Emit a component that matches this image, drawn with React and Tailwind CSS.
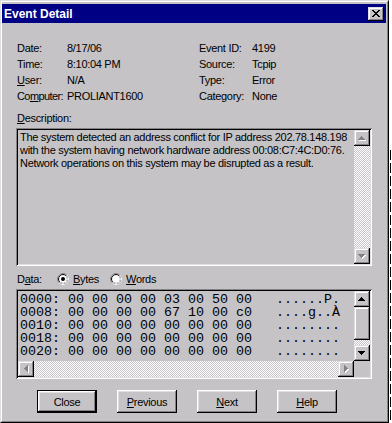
import React from "react";

const RAISED =
  "shadow-[inset_-1px_-1px_#000,inset_1px_1px_#dfdfdf,inset_-2px_-2px_#848284,inset_2px_2px_#fff]";
const BUTTON =
  "shadow-[inset_-1px_-1px_#000,inset_1px_1px_#fff,inset_-2px_-2px_#848284,inset_2px_2px_#dfdfdf]";
const SUNKEN =
  "shadow-[inset_1px_1px_#848284,inset_-1px_-1px_#fff,inset_2px_2px_#000,inset_-2px_-2px_#dfdfdf]";
const CHECKER =
  "bg-[image:repeating-conic-gradient(#c6c3c6_0_25%,#fff_0_50%)] bg-[length:2px_2px]";

// pixel glyphs for the scrollbar arrows
const GLYPHS = {
  up: [[3, 2, 1, 1], [2, 3, 3, 1], [1, 4, 5, 1], [0, 5, 7, 1]],
  down: [[0, 2, 7, 1], [1, 3, 5, 1], [2, 4, 3, 1], [3, 5, 1, 1]],
  left: [[2, 3, 1, 1], [3, 2, 1, 3], [4, 1, 1, 5], [5, 0, 1, 7]],
  right: [[2, 0, 1, 7], [3, 1, 1, 5], [4, 2, 1, 3], [5, 3, 1, 1]],
};

function Arrow({ dir, disabled }) {
  const rects = GLYPHS[dir];
  return (
    <svg width="8" height="8" viewBox="0 0 8 8" shapeRendering="crispEdges">
      {disabled &&
        rects.map(([x, y, w, h], i) => (
          <rect key={"s" + i} x={x + 1} y={y + 1} width={w} height={h} fill="#fff" />
        ))}
      {rects.map(([x, y, w, h], i) => (
        <rect key={i} x={x} y={y} width={w} height={h} fill={disabled ? "#848284" : "#000"} />
      ))}
    </svg>
  );
}

function ScrollBtn({ dir, disabled }) {
  return (
    <div className={`w-[16px] h-[16px] shrink-0 bg-[#c6c3c6] flex items-center justify-center ${RAISED}`}>
      <Arrow dir={dir} disabled={disabled} />
    </div>
  );
}

function Radio({ checked }) {
  return (
    <svg width="12" height="12" viewBox="0 0 12 12">
      <circle cx="6" cy="6" r="5.5" fill="#fff" stroke="#848284" strokeWidth="1" />
      <path d="M9.89 2.11 A5.5 5.5 0 0 1 2.11 9.89" fill="none" stroke="#fff" strokeWidth="1" />
      <circle cx="6" cy="6" r="4.5" fill="none" stroke="#000" strokeWidth="1" />
      <path d="M9.18 2.82 A4.5 4.5 0 0 1 2.82 9.18" fill="none" stroke="#dfdfdf" strokeWidth="1" />
      {checked && <circle cx="6" cy="6" r="2" fill="#000" />}
    </svg>
  );
}

function CloseGlyph() {
  const rows = ["XX....XX", ".XX..XX.", "..XXXX..", "...XX...", "..XXXX..", ".XX..XX.", "XX....XX"];
  return (
    <svg width="8" height="7" viewBox="0 0 8 7" shapeRendering="crispEdges">
      {rows.flatMap((r, y) =>
        r.split("").map((c, x) => (c === "X" ? <rect key={`${x}-${y}`} x={x} y={y} width="1" height="1" fill="#000" /> : null))
      )}
    </svg>
  );
}

const info = [
  ["Date:", "8/17/06", "Event ID:", "4199"],
  ["Time:", "8:10:04 PM", "Source:", "Tcpip"],
  [<><u>U</u>ser:</>, "N/A", "Type:", "Error"],
  [<span className="tracking-[-0.6px]">Co<u>m</u>puter:</span>, "PROLIANT1600", "Category:", "None"],
];

const description = [
  "The system detected an address conflict for IP address 202.78.148.198",
  "with the system having network hardware address 00:08:C7:4C:D0:76.",
  "Network operations on this system may be disrupted as a result.",
];

const hexRows = [
  "0000: 00 00 00 00 03 00 50 00   ......P.",
  "0008: 00 00 00 00 67 10 00 c0   ....g..\u00c0",
  "0010: 00 00 00 00 00 00 00 00   ........",
  "0018: 00 00 00 00 00 00 00 00   ........",
  "0020: 00 00 00 00 00 00 00 00   ........",
];

function PushButton({ children, isDefault }) {
  if (isDefault) {
    return (
      <div className="w-[60px] h-[23px] border border-black">
        <div className={`w-full h-full flex items-center justify-center ${BUTTON}`}>{children}</div>
      </div>
    );
  }
  return <div className={`w-[60px] h-[23px] flex items-center justify-center ${BUTTON}`}>{children}</div>;
}

export default function App() {
  return (
    <div className="w-[392px] h-[423px] bg-white flex overflow-hidden font-['Liberation_Sans',Arial,sans-serif] text-[11px] tracking-[-0.3px] leading-[16px] text-black">
      <div className="w-[389px] h-[423px] shrink-0 border border-t-[#dfdfdf] border-l-[#dfdfdf] border-r-black border-b-black">
        <div className="h-full flex flex-col bg-[#c6c3c6] border border-t-white border-l-white border-r-[#848284] border-b-[#848284] pt-[2px] pr-[1px]">
          {/* title bar */}
          <div className="h-[19px] shrink-0 bg-[#000084] flex items-center justify-between pl-[2px] pr-[2px]">
            <span className="text-white font-bold text-[12px] tracking-normal leading-none">Event Detail</span>
            <div className={`w-[16px] h-[14px] bg-[#c6c3c6] flex items-center justify-center ${RAISED}`}>
              <CloseGlyph />
            </div>
          </div>

          <div className="flex flex-col px-[14px] pt-[17px]">
            {/* header fields */}
            <div className="grid grid-cols-[50px_132px_53px_1fr] pl-[1px]">
              {info.map((row, i) => (
                <React.Fragment key={i}>
                  <div className="h-[16px] whitespace-nowrap">{row[0]}</div>
                  <div className="h-[16px] whitespace-nowrap">{row[1]}</div>
                  <div className="h-[16px] whitespace-nowrap">{row[2]}</div>
                  <div className="h-[16px] whitespace-nowrap">{row[3]}</div>
                </React.Fragment>
              ))}
            </div>

            <div className="mt-[6px] h-[16px] pl-[1px]">
              <u>D</u>escription:
            </div>

            {/* description box */}
            <div className={`mt-[2px] h-[138px] p-[2px] flex ${SUNKEN}`}>
              <div className="flex-1 pl-[2px] pt-[1px] leading-[13px] overflow-hidden">
                {description.map((line) => (
                  <div key={line} className="whitespace-nowrap">{line}</div>
                ))}
              </div>
              <div className="w-[16px] flex flex-col">
                <ScrollBtn dir="up" disabled />
                <div className={`flex-1 ${CHECKER}`} />
                <ScrollBtn dir="down" disabled />
              </div>
            </div>

            {/* data header */}
            <div className="mt-[5px] h-[16px] flex items-center pl-[1px]">
              <span className="w-[40px]">D<u>a</u>ta:</span>
              <span className="w-[53px] flex items-center gap-[4px]">
                <Radio checked />
                <span><u>B</u>ytes</span>
              </span>
              <span className="flex items-center gap-[4px]">
                <Radio />
                <span><u>W</u>ords</span>
              </span>
            </div>

            {/* data box */}
            <div className={`mt-[2px] h-[90px] p-[2px] flex flex-col ${SUNKEN}`}>
              <div className="h-[70px] flex">
                <div className="flex-1 pl-[2px] pt-[2px] overflow-hidden font-['Liberation_Mono','Courier_New',monospace] text-[13.33px] leading-[13px] tracking-normal">
                  {hexRows.map((row) => (
                    <div key={row} className="h-[13px] whitespace-pre">{row}</div>
                  ))}
                </div>
                <div className="w-[16px] flex flex-col">
                  <ScrollBtn dir="up" />
                  <div className={`h-[33px] bg-[#c6c3c6] ${RAISED}`} />
                  <div className={`flex-1 ${CHECKER}`} />
                  <ScrollBtn dir="down" />
                </div>
              </div>
              <div className="h-[16px] flex">
                <ScrollBtn dir="left" disabled />
                <div className={`flex-1 ${CHECKER}`} />
                <ScrollBtn dir="right" disabled />
                <div className="w-[16px] bg-[#c6c3c6]" />
              </div>
            </div>

            {/* buttons */}
            <div className="mt-[11px] flex gap-[20px] pl-[21px]">
              <PushButton isDefault>Close</PushButton>
              <PushButton><u>P</u>revious</PushButton>
              <PushButton><u>N</u>ext</PushButton>
              <PushButton><u>H</u>elp</PushButton>
            </div>
          </div>
        </div>
      </div>

      {/* edge of the window behind */}
      <div className="w-[3px] h-[423px] pt-[150px] pl-[1px]">
        <div className="w-[1px] h-[273px] bg-[image:repeating-linear-gradient(to_bottom,#000_0_10px,transparent_10px_13px)]" />
      </div>
    </div>
  );
}
